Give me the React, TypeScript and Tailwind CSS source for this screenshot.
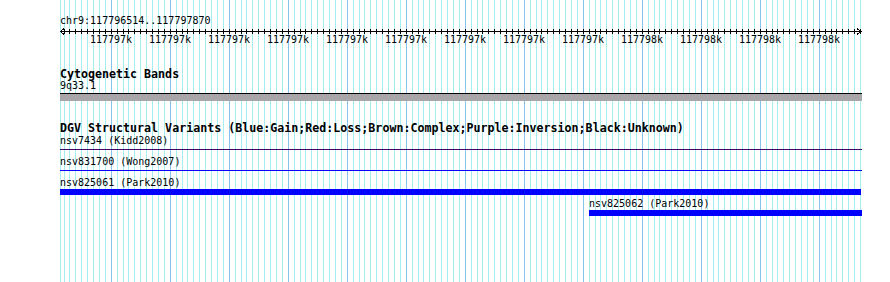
const START = 117796514
const END = 117797870
const LEFT = 60
const WIDTH = 800

function bpToX(bp: number) {
  return LEFT + ((bp - START) * WIDTH) / (END - START)
}

const minor: number[] = []
for (let bp = Math.ceil(START / 10) * 10; bp <= END; bp += 10) minor.push(bp)
const major = minor.filter((bp) => bp % 100 === 0)

function Grid() {
  return (
    <svg
      className="absolute inset-0"
      width={890}
      height={282}
      shapeRendering="crispEdges"
    >
      <line x1={60.5} x2={60.5} y1={0} y2={282} stroke="#a4eef2" />
      {minor.map((bp) => {
        const x = Math.round(bpToX(bp)) + 0.5
        const isMajor = bp % 100 === 0
        return (
          <line
            key={bp}
            x1={x}
            x2={x}
            y1={0}
            y2={282}
            stroke={isMajor ? "#86c2ee" : "#a4eef2"}
          />
        )
      })}
    </svg>
  )
}

function Ruler() {
  return (
    <div className="relative h-[19px] w-[802px]">
      <svg className="absolute left-0 top-0" width={802} height={10} shapeRendering="crispEdges">
        <line x1={0} x2={802} y1={4.5} y2={4.5} stroke="#000" />
        {minor.map((bp) => {
          const x = Math.round(bpToX(bp)) - LEFT + 0.5
          return <line key={bp} x1={x} x2={x} y1={2} y2={7} stroke="#000" />
        })}
        <polyline points="4,1.5 0.5,4.5 4,7.5" fill="none" stroke="#000" />
        <polyline points="797,1.5 800.5,4.5 797,7.5" fill="none" stroke="#000" />
      </svg>
      {major.map((bp) => (
        <span
          key={bp}
          className="absolute top-[6px] -translate-x-1/2 text-[10px] leading-[13px]"
          style={{ left: Math.round(bpToX(bp)) - LEFT }}
        >
          {bp < 117797500 ? "117797k" : "117798k"}
        </span>
      ))}
    </div>
  )
}

export default function App() {
  return (
    <div className="relative h-[282px] w-[890px] overflow-hidden bg-white font-['DejaVu_Sans_Mono',monospace] text-black">
      <Grid />
      <div className="relative flex flex-col items-start pl-[60px]">
        <div className="mt-[14px] h-[13px] text-[10px] leading-[13px]">
          chr9:117796514..117797870
        </div>
        <Ruler />

        <div className="mt-[22px] h-[13px] text-[11.65px] font-bold leading-[13px]">
          Cytogenetic Bands
        </div>
        <div className="-mt-[2px] h-[13px] text-[10px] leading-[13px]">9q33.1</div>
        <div className="mt-[1px] h-[8px] w-[802px] border-t border-black bg-[#a8a6a8]" />

        <div className="mt-[21px] h-[13px] text-[11.65px] font-bold leading-[13px]">
          DGV Structural Variants (Blue:Gain;Red:Loss;Brown:Complex;Purple:Inversion;Black:Unknown)
        </div>
        <div className="-mt-[1px] h-[13px] text-[10px] leading-[13px]">nsv7434 (Kidd2008)</div>
        <div className="mt-[2px] h-px w-[802px] bg-[#3c0a64]" />
        <div className="mt-[5px] h-[13px] text-[10px] leading-[13px]">nsv831700 (Wong2007)</div>
        <div className="mt-[2px] h-px w-[802px] bg-[#0000ff]" />
        <div className="mt-[5px] h-[13px] text-[10px] leading-[13px]">nsv825061 (Park2010)</div>
        <div className="h-[6px] w-[801px] bg-[#0000ff]" />
        <div className="ml-[529px] mt-[2px] h-[13px] text-[10px] leading-[13px]">
          nsv825062 (Park2010)
        </div>
        <div className="ml-[529px] h-[6px] w-[273px] bg-[#0000ff]" />
      </div>
    </div>
  )
}
